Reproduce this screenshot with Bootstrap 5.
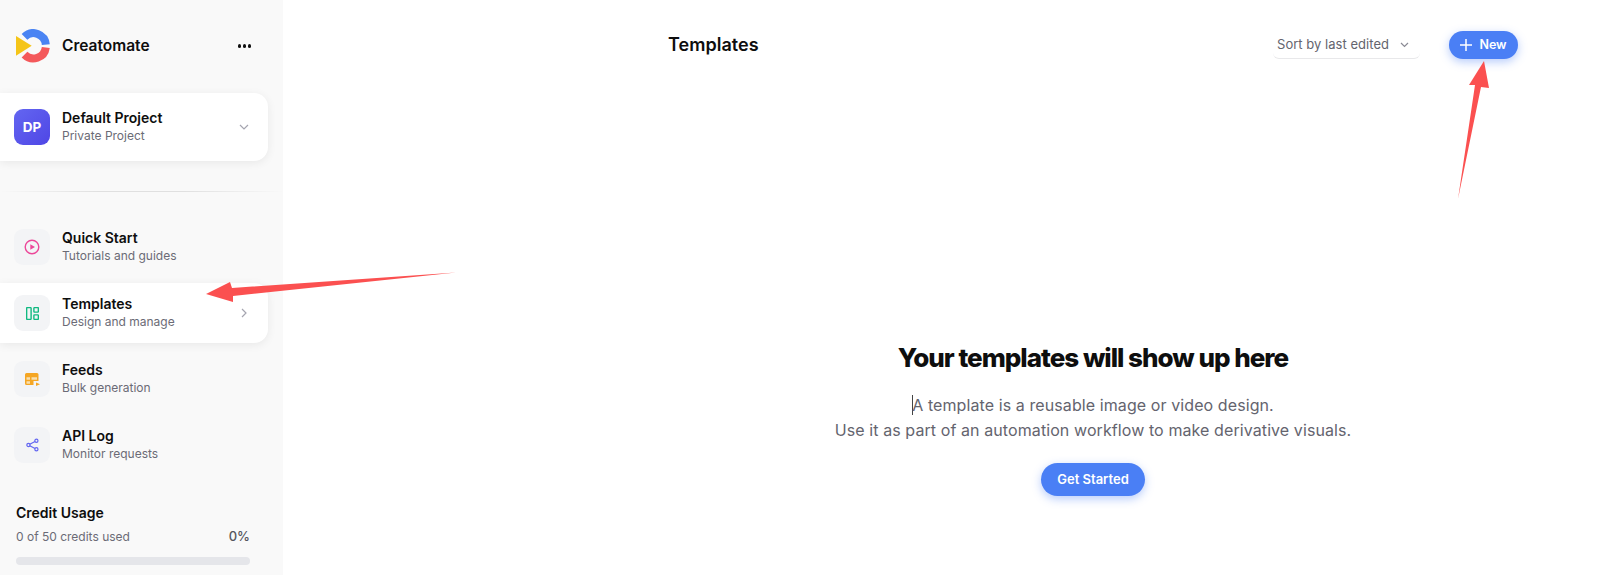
<!DOCTYPE html>
<html lang="en"><head><meta charset="utf-8"><title>Templates</title>
<link href="https://cdn.jsdelivr.net/npm/bootstrap@5.3.0/dist/css/bootstrap.min.css" rel="stylesheet">
<style>
html,body{height:575px;overflow:hidden}
body{font-family:Inter,"Liberation Sans",sans-serif;color:#0e0e0e;background:#fff;position:relative}
.shell{height:575px}
.side{width:283px;flex:none;background:#f9f9f9;height:575px;overflow:hidden}
.brand{height:92px;margin-bottom:1px;padding:0 32px 0 16px}
.brand-name{font-size:15.5px;font-weight:600;margin-left:12px}
.dots{display:flex;gap:1.5px}
.dots i{width:3.5px;height:3.5px;border-radius:50%;background:#111;display:block}
.tile{display:flex;align-items:center;width:268px;padding:0 19px 0 14px;border-radius:0 14px 14px 0}
.tile.on{background:#fff;box-shadow:0 2px 10px rgba(0,0,0,.07)}
.proj{height:68px}
.nav-row{height:60px}
.nav-row.on{padding-right:21px}
.nav-row+.nav-row{margin-top:6px}
.sq{width:36px;height:36px;border-radius:9px;background:#f3f4f6;flex:none;display:flex;align-items:center;justify-content:center;margin-right:12px}
.avatar{background:linear-gradient(135deg,#6366f1,#4f46e5);color:#fff;font-weight:700;font-size:13.5px}
.tx{margin-top:-2px}
.t1{font-size:14px;font-weight:600;line-height:18px;color:#0e0e0e}
.t2{font-size:12px;line-height:17px;color:#6b6b76}
.rule{height:1px;background:linear-gradient(90deg,rgba(224,224,224,0),#e0e0e0 35%,#e0e0e0 65%,rgba(224,224,224,0));margin:30px 0 0}
.navs{margin-top:25px}
.usage{padding:0 33px 0 16px;margin-top:29px}
.usage .t1{margin-bottom:6px}
.pct{color:#55555e;font-weight:500;font-size:13px}
.meter{height:8px;background:#e5e6ea;border-radius:4px;margin-top:12px}
.mainp{padding:0 106px 0 385px}
.head{height:88px}
.title{font-size:18px;font-weight:600;letter-spacing:.03px}
.sorter{font-size:13px;letter-spacing:.03px;color:#64646e;border-bottom:1px solid #e8e8ea;border-radius:0 0 6px 6px;height:28px;padding:0 11px 0 4px;margin-right:29px;margin-top:2px;gap:11px}
.btn-blue{background:#4a7ff5;color:#fff;border:0;border-radius:17px;font-weight:600;font-size:13px;box-shadow:0 3px 10px rgba(74,127,245,.4)}
.btn-blue:hover{background:#4a7ff5;color:#fff}
.btn-new{height:28px;width:69px;padding:0;gap:7px;font-size:12.5px;margin-top:2px}
.empty{margin-top:254px;text-align:center}
.empty h1{font-size:26px;font-weight:800;letter-spacing:-1px;margin:0;line-height:32px;color:#0e0e0e}
.lines{font-size:16px;letter-spacing:.09px;line-height:25px;color:#64646e;margin:19px 0 20px;position:relative}
.caret{display:inline-block;width:1px;height:20px;background:#444;vertical-align:-4px;margin-right:-1px}
.btn-go{width:104px;height:33px;padding:0}
.arrows{position:absolute;left:0;top:0;pointer-events:none}
</style></head><body>
<div class="d-flex shell">
<aside class="side">
 <div class="brand d-flex align-items-center">
  <svg width="34" height="34" viewBox="0 0 34 34"><path d="M8.5 7.8A12.5 12.5 0 0 1 29.8 15.6" fill="none" stroke="#4a84f3" stroke-width="8"/><path d="M8.5 25.6A12.5 12.5 0 0 0 29.8 18.4" fill="none" stroke="#f4595b" stroke-width="8"/><path d="M0 7L15.7 16.7 0 26.7Z" fill="#f5c518"/></svg>
  <span class="brand-name flex-grow-1">Creatomate</span>
  <span class="dots"><i></i><i></i><i></i></span>
 </div>
 <div class="tile on proj">
  <div class="sq avatar">DP</div>
  <div class="flex-grow-1 tx"><div class="t1">Default Project</div><div class="t2">Private Project</div></div>
  <svg width="10" height="6" viewBox="0 0 10 6"><path d="M1 1l4 4 4-4" fill="none" stroke="#a5a5b0" stroke-width="1.2"/></svg>
 </div>
 <div class="rule"></div>
 <div class="navs">
  <div class="tile nav-row">
   <div class="sq"><svg width="16" height="16" viewBox="0 0 16 16"><circle cx="8" cy="8" r="6.8" fill="none" stroke="#ec4899" stroke-width="1.4"/><path d="M6.3 5.2L11 8 6.3 10.8Z" fill="#ec4899"/></svg></div>
   <div class="tx"><div class="t1">Quick Start</div><div class="t2">Tutorials and guides</div></div>
  </div>
  <div class="tile nav-row on">
   <div class="sq"><svg width="13" height="13" viewBox="0 0 14 14" fill="none" stroke="#10b981" stroke-width="1.5"><rect x=".7" y=".7" width="4.8" height="12.6" rx=".6"/><rect x="8.5" y=".7" width="4.8" height="4.8" rx=".6"/><rect x="8.5" y="8.5" width="4.8" height="4.8" rx=".6"/></svg></div>
   <div class="flex-grow-1 tx"><div class="t1">Templates</div><div class="t2">Design and manage</div></div>
   <svg width="6" height="10" viewBox="0 0 6 10"><path d="M1 1l4 4-4 4" fill="none" stroke="#a5a5b0" stroke-width="1.2"/></svg>
  </div>
  <div class="tile nav-row">
   <div class="sq"><svg width="15" height="13" viewBox="0 0 15 13"><path d="M1.5 0h10.5a1.5 1.5 0 0 1 1.5 1.5V8H8.5v4H1.5A1.5 1.5 0 0 1 0 10.500V1.500A1.500 1.500 0 0 1 1.500 0Z" fill="#f5a623"/><path d="M1.500 4.300h3.500v2.500H1.500ZM6.500 4.300h5.500v2.500H6.500ZM1.500 8.300h3.500v2.500H1.500Z" fill="#f8dfb0"/><path d="M11 9.500L15 11.200 11 13Z" fill="#f5a623"/></svg></div>
   <div class="tx"><div class="t1">Feeds</div><div class="t2">Bulk generation</div></div>
  </div>
  <div class="tile nav-row">
   <div class="sq"><svg width="13" height="14" viewBox="0 0 14 14" fill="none" stroke="#6366f1" stroke-width="1.3"><circle cx="2.6" cy="7" r="1.7"/><circle cx="11.2" cy="2.4" r="1.7"/><circle cx="11.2" cy="11.6" r="1.7"/><path d="M4.1 6.2L9.7 3.2M4.1 7.8L9.7 10.8"/></svg></div>
   <div class="tx"><div class="t1">API Log</div><div class="t2">Monitor requests</div></div>
  </div>
 </div>
 <div class="usage">
  <div class="t1">Credit Usage</div>
  <div class="d-flex justify-content-between align-items-center t2"><span>0 of 50 credits used</span><span class="pct">0%</span></div>
  <div class="meter"></div>
 </div>
</aside>
<main class="flex-grow-1 mainp">
 <div class="head d-flex align-items-center">
  <div class="title flex-grow-1">Templates</div>
  <div class="sorter d-flex align-items-center"><span>Sort by last edited</span><svg width="9" height="6" viewBox="0 0 9 6"><path d="M1 1l3.5 3.5L8 1" fill="none" stroke="#8a8a94" stroke-width="1.2"/></svg></div>
  <button type="button" class="btn btn-blue btn-new d-flex align-items-center justify-content-center"><svg width="12" height="12" viewBox="0 0 12 12"><path d="M6 0v12M0 6h12" stroke="#fff" stroke-width="1.5"/></svg>New</button>
 </div>
 <div class="empty">
  <h1>Your templates will show up here</h1>
  <div class="lines"><span class="caret"></span>A template is a reusable image or video design.<br>Use it as part of an automation workflow to make derivative visuals.</div>
  <button type="button" class="btn btn-blue btn-go">Get Started</button>
 </div>
</main>
</div>
<svg class="arrows" width="1624" height="575" viewBox="0 0 1624 575"><path d="M456 272.5L232 288 230 282 206 294 233 302 233 296Z" fill="#fb5050"/><path d="M1458 199L1475 85 1469 85 1484 61 1489 88 1481 87Z" fill="#fb5050"/></svg>
<script src="https://cdn.jsdelivr.net/npm/bootstrap@5.3.0/dist/js/bootstrap.bundle.min.js"></script>
</body></html>
